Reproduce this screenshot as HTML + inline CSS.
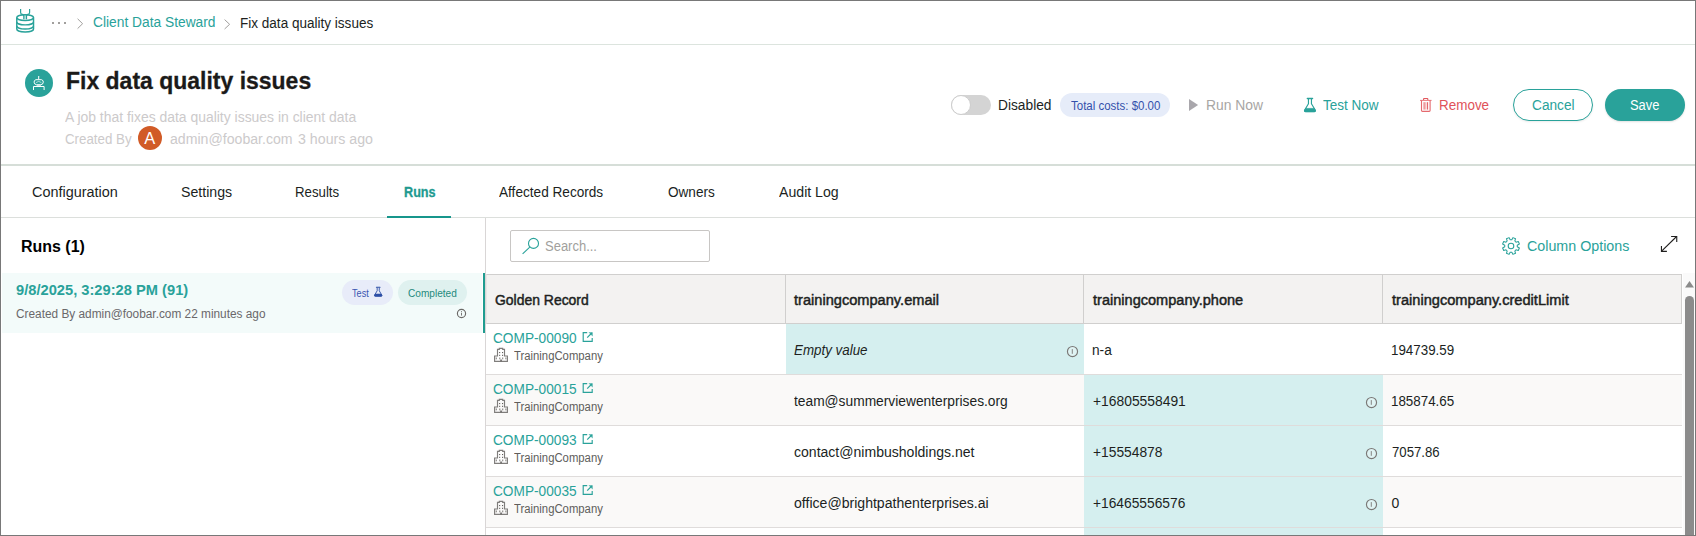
<!DOCTYPE html>
<html><head><meta charset="utf-8"><title>Fix data quality issues</title>
<style>
*{box-sizing:border-box;margin:0;padding:0}
html,body{width:1696px;height:536px;overflow:hidden;background:#fff}
body{font-family:"Liberation Sans",sans-serif;position:relative;color:#201f1e}
.a{position:absolute}
.t{transform-origin:0 0;position:absolute;white-space:nowrap;display:block}
svg{position:absolute;overflow:visible}
</style></head><body>
<!-- header / tab separators -->
<div class="a" style="left:0;top:44px;width:1696px;height:1px;background:#dce4de"></div>
<div class="a" style="left:0;top:164px;width:1696px;height:2px;background:#d6ded8"></div>
<div class="a" style="left:0;top:217px;width:1696px;height:1px;background:#dcdfdc"></div>
<div class="a" style="left:387px;top:216px;width:64px;height:2px;background:#17968c"></div>

<!-- title icon circle + avatar -->
<div class="a" style="left:25px;top:69px;width:28px;height:28px;border-radius:50%;background:#29a29a"></div>
<div class="a" style="left:138px;top:126px;width:24px;height:24px;border-radius:50%;background:#d15b27"></div>

<!-- toggle -->
<div class="a" style="left:951px;top:95px;width:40px;height:20px;border-radius:10px;background:#d4d4d4"></div>
<div class="a" style="left:951px;top:95px;width:20px;height:20px;border-radius:50%;background:#fff;border:1px solid #cdcdcd"></div>
<!-- cost pill -->
<div class="a" style="left:1060px;top:93px;width:110px;height:24px;border-radius:12px;background:#e6ecf9"></div>
<!-- buttons -->
<div class="a" style="left:1513px;top:89px;width:80px;height:32px;border-radius:16px;border:1px solid #29a29a;background:#fff;box-shadow:0 1px 2px rgba(0,0,0,.08)"></div>
<div class="a" style="left:1605px;top:89px;width:80px;height:32px;border-radius:16px;background:#29a29a;box-shadow:0 1px 2px rgba(0,0,0,.12)"></div>

<!-- left panel -->
<div class="a" style="left:2px;top:273px;width:480px;height:60px;background:#f3fbfa"></div>
<div class="a" style="left:483px;top:273px;width:2px;height:60px;background:#1f9c90"></div>
<div class="a" style="left:485px;top:218px;width:1px;height:318px;background:#d9d6d6"></div>
<div class="a" style="left:342px;top:280px;width:51px;height:25px;border-radius:12.5px;background:#e8ecf9"></div>
<div class="a" style="left:398px;top:280px;width:69px;height:25px;border-radius:12.5px;background:#dff1ef"></div>

<!-- search box -->
<div class="a" style="left:510px;top:230px;width:200px;height:32px;border:1px solid #c8c6c4;border-radius:2px;background:#fff"></div>

<!-- table -->
<div class="a" style="left:486px;top:274px;width:1196px;height:50px;background:#f3f2f1;border:1px solid #d0cfce;border-left-color:#e9e7e6"></div>
<div class="a" style="left:785px;top:275px;width:1px;height:48px;background:#d0cfce"></div>
<div class="a" style="left:1083px;top:275px;width:1px;height:48px;background:#d0cfce"></div>
<div class="a" style="left:1382px;top:275px;width:1px;height:48px;background:#d0cfce"></div>
<!-- rows -->
<div class="a" style="left:486px;top:375px;width:1196px;height:50px;background:#faf9f8"></div>
<div class="a" style="left:486px;top:477px;width:1196px;height:50px;background:#faf9f8"></div>
<!-- highlighted cells -->
<div class="a" style="left:786px;top:324px;width:298px;height:50px;background:#d5efef"></div>
<div class="a" style="left:1084px;top:375px;width:299px;height:161px;background:#d5efef"></div>
<div class="a" style="left:486px;top:374px;width:1196px;height:1px;background:#dfdcdb"></div>
<div class="a" style="left:486px;top:425px;width:1196px;height:1px;background:#dfdcdb"></div>
<div class="a" style="left:486px;top:476px;width:1196px;height:1px;background:#dfdcdb"></div>
<div class="a" style="left:486px;top:527px;width:1196px;height:1px;background:#dfdcdb"></div>

<!-- scrollbar -->
<div class="a" style="left:1683px;top:273px;width:12px;height:263px;background:#fafafa"></div>
<div class="a" style="left:1685px;top:296px;width:9px;height:240px;border-radius:4.5px 4.5px 0 0;background:#8b8b8b"></div>
<svg style="left:1685px;top:281px" width="9" height="7" viewBox="0 0 9 7"><path d="M0 6.5 L4.5 0 L9 6.5 Z" fill="#8b8b8b"/></svg>

<svg style="left:0;top:0" width="1696" height="536" viewBox="0 0 1696 536" fill="none">
<rect x="23.9" y="14.6" width="2.6" height="4.6" fill="#29a29a" opacity=".3"/>
<path d="M16.8 17.6 V29 A8.35 3 0 0 0 33.5 29 V17.6" stroke="#29a29a" stroke-width="1.5"/>
<ellipse cx="25.15" cy="17.6" rx="8.35" ry="2.9" stroke="#29a29a" stroke-width="1.4"/>
<path d="M16.8 21.9 A8.35 3 0 0 0 33.5 21.9 M16.8 26 A8.35 3 0 0 0 33.5 26" stroke="#29a29a" stroke-width="1.4"/>
<path d="M20.6 9 V12.4 Q20.6 14 22.4 14.4 Q23.8 14.8 23.8 16 V19.3 M29.6 9 V12.4 Q29.6 14 27.8 14.4 Q26.5 14.8 26.5 16 V19.3" stroke="#29a29a" stroke-width="1.2"/>
<rect x="52" y="22" width="2" height="2" fill="#a19f9d"/>
<rect x="58" y="22" width="2" height="2" fill="#a19f9d"/>
<rect x="64" y="22" width="2" height="2" fill="#a19f9d"/>
<path d="M77.6 18.8 L82.6 23.7 L77.6 28.6" stroke="#a19f9d" stroke-width="1"/>
<path d="M224.6 19.6 L229.6 24.3 L224.6 29" stroke="#a19f9d" stroke-width="1"/>
<g stroke="#fff" stroke-width="1" fill="none"><path d="M38.7 76.6 V79.4"/><circle cx="38.7" cy="76.6" r="0.6" fill="#fff" stroke="none"/><path d="M35.9 79.7 H41.5 Q43.5 80.3 43.3 82.2 Q43 84.7 40.8 84.7 H36.6 Q34.4 84.7 34.1 82.2 Q33.9 80.3 35.9 79.7 Z"/><path d="M36 82.6 Q38.7 80.2 41.4 82.6" opacity=".6"/><path d="M36.6 85.6 H40.9" opacity=".7"/><path d="M33.5 90 V86.5 H44.1 V90"/></g>
<path d="M1189 98.9 L1198.1 105 L1189 111.1 Z" fill="#a9a7ac"/>
<path d="M1308.45 99.10 V103.70 L1304.70 110.00 Q1304.00 111.60 1305.60 111.60 H1314.30 Q1315.90 111.60 1315.20 110.00 L1311.45 103.70 V99.10" fill="none" stroke="#29a29a" stroke-width="1.15" stroke-linejoin="round"/><path d="M1305.70 108.40 H1314.20 L1315.20 110.00 Q1315.90 111.60 1314.30 111.60 H1305.60 Q1304.00 111.60 1304.70 110.00 Z" fill="#29a29a" stroke="#29a29a" stroke-width="0.69" stroke-linejoin="round"/><path d="M1307.30 98.50 H1312.60" stroke="#29a29a" stroke-width="1.32" stroke-linecap="round"/>
<g stroke="#e2595e" fill="none"><path d="M1423.6 99.9 V98.9 Q1423.6 98.5 1424 98.5 H1427.4 Q1427.8 98.5 1427.8 98.9 V99.9" stroke-width="1.1"/><path d="M1420 100.4 H1431.6" stroke-width="1" opacity=".8"/><path d="M1421.5 100.4 V110.5 Q1421.5 111.4 1422.4 111.4 H1429.2 Q1430.1 111.4 1430.1 110.5 V100.4" stroke-width="1.1" opacity=".9"/><path d="M1424.1 102.2 V109.6 M1427.6 102.2 V109.6" stroke-width="1"/><path d="M1425.85 102.2 V109.6" stroke-width="1" opacity=".6"/></g>
<circle cx="533.5" cy="243.4" r="5" stroke="#29a29a" stroke-width="1.1"/><path d="M529.8 247.1 L522.6 253.8" stroke="#29a29a" stroke-width="1.1"/>
<path d="M1517.25 246.82 L1519.38 247.93 L1518.29 250.56 L1516.00 249.84 L1514.84 251.00 L1515.56 253.29 L1512.93 254.38 L1511.82 252.25 L1510.18 252.25 L1509.07 254.38 L1506.44 253.29 L1507.16 251.00 L1506.00 249.84 L1503.71 250.56 L1502.62 247.93 L1504.75 246.82 L1504.75 245.18 L1502.62 244.07 L1503.71 241.44 L1506.00 242.16 L1507.16 241.00 L1506.44 238.71 L1509.07 237.62 L1510.18 239.75 L1511.82 239.75 L1512.93 237.62 L1515.56 238.71 L1514.84 241.00 L1516.00 242.16 L1518.29 241.44 L1519.38 244.07 L1517.25 245.18 Z" stroke="#29a29a" stroke-width="1.05" stroke-linejoin="round"/><circle cx="1511" cy="246" r="2.8" stroke="#29a29a" stroke-width="1.05"/>
<g stroke="#201f1e" stroke-width="1.1"><path d="M1676.6 236.5 L1661.6 251.2"/><path d="M1671.1 236.45 H1676.75 V241.9"/><path d="M1661.45 246.1 V251.35 H1666.9"/></g>
<path d="M377.18 287.60 V290.77 L374.59 295.12 Q374.11 296.22 375.21 296.22 H381.21 Q382.32 296.22 381.83 295.12 L379.25 290.77 V287.60" fill="none" stroke="#2d4fa6" stroke-width="0.9" stroke-linejoin="round"/><path d="M375.28 294.01 H381.14 L381.83 295.12 Q382.32 296.22 381.21 296.22 H375.21 Q374.11 296.22 374.59 295.12 Z" fill="#2d4fa6" stroke="#2d4fa6" stroke-width="0.54" stroke-linejoin="round"/><path d="M376.38 287.18 H380.04" stroke="#2d4fa6" stroke-width="1.03" stroke-linecap="round"/>
<circle cx="461.5" cy="313.5" r="4.1" fill="none" stroke="#6b6967" stroke-width="1.15"/><path d="M461.5 312.7 V315.6" stroke="#6b6967" stroke-width="0.9"/><circle cx="461.5" cy="311.5" r="0.5" fill="#6b6967"/>
<circle cx="1072.5" cy="351.5" r="5.05" fill="rgba(255,255,255,.25)" stroke="#7a7876" stroke-width="1.15"/><path d="M1072.3 349.1 V353.8" stroke="#7a7876" stroke-width="0.9"/>
<circle cx="1371.5" cy="402.5" r="5.05" fill="rgba(255,255,255,.25)" stroke="#7a7876" stroke-width="1.15"/><path d="M1371.3 400.1 V404.8" stroke="#7a7876" stroke-width="0.9"/>
<circle cx="1371.5" cy="453.5" r="5.05" fill="rgba(255,255,255,.25)" stroke="#7a7876" stroke-width="1.15"/><path d="M1371.3 451.1 V455.8" stroke="#7a7876" stroke-width="0.9"/>
<circle cx="1371.5" cy="504.5" r="5.05" fill="rgba(255,255,255,.25)" stroke="#7a7876" stroke-width="1.15"/><path d="M1371.3 502.1 V506.8" stroke="#7a7876" stroke-width="0.9"/>
<path d="M587.2 332.6 H583.2 V341.3 H592.2 V337.90000000000003" fill="none" stroke="#29a29a" stroke-width="1.15"/><path d="M587.2 337.6 L591.8000000000001 333.0" stroke="#29a29a" stroke-width="1.15"/><path d="M588.5 332.20000000000005 H592.7 V336.40000000000003 Z" fill="#29a29a" opacity=".85"/>
<path d="M494.6 361.29999999999995 V356.0 H497.5 V349.4 H499.3 V348.4 H502.70000000000005 V349.4 H504.5 V356.0 H507.40000000000003 V361.29999999999995 Z" fill="none" stroke="#7f7d7b" stroke-width="1.15"/><rect x="499.1" y="352.0" width="1.1" height="1.1" fill="#605e5c"/><rect x="502.0" y="352.0" width="1.1" height="1.1" fill="#605e5c"/><rect x="499.1" y="354.8" width="1.1" height="1.1" fill="#605e5c"/><rect x="502.0" y="354.8" width="1.1" height="1.1" fill="#605e5c"/><rect x="495.7" y="357.5" width="1.3" height="1.8" fill="#7f7d7b" opacity=".8"/><rect x="499.1" y="357.5" width="1.3" height="1.8" fill="#7f7d7b" opacity=".8"/><rect x="502.0" y="357.5" width="1.3" height="1.8" fill="#7f7d7b" opacity=".8"/><rect x="505.2" y="357.5" width="1.3" height="1.8" fill="#7f7d7b" opacity=".8"/><rect x="500.3" y="359.5" width="1.5" height="1.8" fill="#605e5c"/>
<path d="M587.2 383.6 H583.2 V392.3 H592.2 V388.90000000000003" fill="none" stroke="#29a29a" stroke-width="1.15"/><path d="M587.2 388.6 L591.8000000000001 384.0" stroke="#29a29a" stroke-width="1.15"/><path d="M588.5 383.20000000000005 H592.7 V387.40000000000003 Z" fill="#29a29a" opacity=".85"/>
<path d="M494.6 412.29999999999995 V407.0 H497.5 V400.4 H499.3 V399.4 H502.70000000000005 V400.4 H504.5 V407.0 H507.40000000000003 V412.29999999999995 Z" fill="none" stroke="#7f7d7b" stroke-width="1.15"/><rect x="499.1" y="403.0" width="1.1" height="1.1" fill="#605e5c"/><rect x="502.0" y="403.0" width="1.1" height="1.1" fill="#605e5c"/><rect x="499.1" y="405.8" width="1.1" height="1.1" fill="#605e5c"/><rect x="502.0" y="405.8" width="1.1" height="1.1" fill="#605e5c"/><rect x="495.7" y="408.5" width="1.3" height="1.8" fill="#7f7d7b" opacity=".8"/><rect x="499.1" y="408.5" width="1.3" height="1.8" fill="#7f7d7b" opacity=".8"/><rect x="502.0" y="408.5" width="1.3" height="1.8" fill="#7f7d7b" opacity=".8"/><rect x="505.2" y="408.5" width="1.3" height="1.8" fill="#7f7d7b" opacity=".8"/><rect x="500.3" y="410.5" width="1.5" height="1.8" fill="#605e5c"/>
<path d="M587.2 434.6 H583.2 V443.3 H592.2 V439.90000000000003" fill="none" stroke="#29a29a" stroke-width="1.15"/><path d="M587.2 439.6 L591.8000000000001 435.0" stroke="#29a29a" stroke-width="1.15"/><path d="M588.5 434.20000000000005 H592.7 V438.40000000000003 Z" fill="#29a29a" opacity=".85"/>
<path d="M494.6 463.29999999999995 V458.0 H497.5 V451.4 H499.3 V450.4 H502.70000000000005 V451.4 H504.5 V458.0 H507.40000000000003 V463.29999999999995 Z" fill="none" stroke="#7f7d7b" stroke-width="1.15"/><rect x="499.1" y="454.0" width="1.1" height="1.1" fill="#605e5c"/><rect x="502.0" y="454.0" width="1.1" height="1.1" fill="#605e5c"/><rect x="499.1" y="456.8" width="1.1" height="1.1" fill="#605e5c"/><rect x="502.0" y="456.8" width="1.1" height="1.1" fill="#605e5c"/><rect x="495.7" y="459.5" width="1.3" height="1.8" fill="#7f7d7b" opacity=".8"/><rect x="499.1" y="459.5" width="1.3" height="1.8" fill="#7f7d7b" opacity=".8"/><rect x="502.0" y="459.5" width="1.3" height="1.8" fill="#7f7d7b" opacity=".8"/><rect x="505.2" y="459.5" width="1.3" height="1.8" fill="#7f7d7b" opacity=".8"/><rect x="500.3" y="461.5" width="1.5" height="1.8" fill="#605e5c"/>
<path d="M587.2 485.6 H583.2 V494.3 H592.2 V490.90000000000003" fill="none" stroke="#29a29a" stroke-width="1.15"/><path d="M587.2 490.6 L591.8000000000001 486.0" stroke="#29a29a" stroke-width="1.15"/><path d="M588.5 485.20000000000005 H592.7 V489.40000000000003 Z" fill="#29a29a" opacity=".85"/>
<path d="M494.6 514.3 V509.0 H497.5 V502.4 H499.3 V501.4 H502.70000000000005 V502.4 H504.5 V509.0 H507.40000000000003 V514.3 Z" fill="none" stroke="#7f7d7b" stroke-width="1.15"/><rect x="499.1" y="505.0" width="1.1" height="1.1" fill="#605e5c"/><rect x="502.0" y="505.0" width="1.1" height="1.1" fill="#605e5c"/><rect x="499.1" y="507.8" width="1.1" height="1.1" fill="#605e5c"/><rect x="502.0" y="507.8" width="1.1" height="1.1" fill="#605e5c"/><rect x="495.7" y="510.5" width="1.3" height="1.8" fill="#7f7d7b" opacity=".8"/><rect x="499.1" y="510.5" width="1.3" height="1.8" fill="#7f7d7b" opacity=".8"/><rect x="502.0" y="510.5" width="1.3" height="1.8" fill="#7f7d7b" opacity=".8"/><rect x="505.2" y="510.5" width="1.3" height="1.8" fill="#7f7d7b" opacity=".8"/><rect x="500.3" y="512.5" width="1.5" height="1.8" fill="#605e5c"/>
</svg>
<span class="t" id="bc1" style="left:93.00px;top:14.60px;font-size:14px;line-height:14px;color:#29a29a;transform:scaleX(0.9840);">Client Data Steward</span>
<span class="t" id="bc2" style="left:240.00px;top:15.60px;font-size:14px;line-height:14px;color:#201f1e;transform:scaleX(0.9672);">Fix data quality issues</span>
<span class="t" id="title" style="left:66.00px;top:68.80px;font-size:24px;line-height:24px;color:#1b1a19;transform:scaleX(0.9573);font-weight:700;-webkit-text-stroke:0.3px currentColor;">Fix data quality issues</span>
<span class="t" id="sub" style="left:65.00px;top:110.10px;font-size:14px;line-height:14px;color:#cccacb;transform:scaleX(0.9949);">A job that fixes data quality issues in client data</span>
<span class="t" id="cby" style="left:65.00px;top:131.60px;font-size:14px;line-height:14px;color:#cccacb;transform:scaleX(0.9500);">Created By</span>
<span class="t" id="adm" style="left:170.00px;top:131.60px;font-size:14px;line-height:14px;color:#cccacb;transform:scaleX(1.0083);">admin@foobar.com</span>
<span class="t" id="hrs" style="left:298.00px;top:131.60px;font-size:14px;line-height:14px;color:#cccacb;transform:scaleX(1.0139);">3 hours ago</span>
<span class="t" id="avA" style="left:144.35px;top:130.10px;font-size:16.5px;line-height:16.5px;color:#ffffff;">A</span>
<span class="t" id="dis" style="left:998.00px;top:98.10px;font-size:14px;line-height:14px;color:#201f1e;transform:scaleX(0.9819);">Disabled</span>
<span class="t" id="cost" style="left:1071.00px;top:99.80px;font-size:12px;line-height:12px;color:#3350ab;transform:scaleX(0.9570);">Total costs: $0.00</span>
<span class="t" id="run" style="left:1206.00px;top:98.10px;font-size:14px;line-height:14px;color:#a8a6a4;transform:scaleX(0.9912);">Run Now</span>
<span class="t" id="test" style="left:1323.00px;top:98.10px;font-size:14px;line-height:14px;color:#29a29a;transform:scaleX(0.9653);">Test Now</span>
<span class="t" id="rem" style="left:1439.00px;top:98.10px;font-size:14px;line-height:14px;color:#e0525a;transform:scaleX(0.9608);">Remove</span>
<span class="t" id="can" style="left:1532.00px;top:98.10px;font-size:14px;line-height:14px;color:#29a29a;transform:scaleX(0.9773);">Cancel</span>
<span class="t" id="sav" style="left:1630.00px;top:98.10px;font-size:14px;line-height:14px;color:#ffffff;transform:scaleX(0.9205);">Save</span>
<span class="t" id="t1" style="left:32.00px;top:185.10px;font-size:14px;line-height:14px;color:#201f1e;transform:scaleX(1.0304);">Configuration</span>
<span class="t" id="t2" style="left:181.00px;top:185.10px;font-size:14px;line-height:14px;color:#201f1e;transform:scaleX(1.0106);">Settings</span>
<span class="t" id="t3" style="left:295.00px;top:185.10px;font-size:14px;line-height:14px;color:#201f1e;transform:scaleX(0.9463);">Results</span>
<span class="t" id="t4" style="left:404.00px;top:185.10px;font-size:14px;line-height:14px;color:#219a90;transform:scaleX(0.9042);font-weight:700;-webkit-text-stroke:0.3px currentColor;">Runs</span>
<span class="t" id="t5" style="left:499.00px;top:185.10px;font-size:14px;line-height:14px;color:#201f1e;transform:scaleX(0.9723);">Affected Records</span>
<span class="t" id="t6" style="left:668.00px;top:185.10px;font-size:14px;line-height:14px;color:#201f1e;transform:scaleX(0.9692);">Owners</span>
<span class="t" id="t7" style="left:779.00px;top:185.10px;font-size:14px;line-height:14px;color:#201f1e;transform:scaleX(1.0089);">Audit Log</span>
<span class="t" id="runs" style="left:21.00px;top:239.40px;font-size:16px;line-height:16px;color:#000000;transform:scaleX(0.9977);font-weight:700;">Runs (1)</span>
<span class="t" id="rt" style="left:16.00px;top:283.10px;font-size:14px;line-height:14px;color:#29a29a;transform:scaleX(1.0488);font-weight:700;">9/8/2025, 3:29:28 PM (91)</span>
<span class="t" id="rs" style="left:16.00px;top:307.80px;font-size:12px;line-height:12px;color:#6a686a;transform:scaleX(0.9862);">Created By admin@foobar.com 22 minutes ago</span>
<span class="t" id="ptest" style="left:351.75px;top:287.50px;font-size:10.5px;line-height:10.5px;color:#3a55b0;transform:scaleX(0.8716);">Test</span>
<span class="t" id="pcomp" style="left:408.00px;top:287.50px;font-size:10.5px;line-height:10.5px;color:#1f8a7d;transform:scaleX(0.9613);">Completed</span>
<span class="t" id="srch" style="left:545.00px;top:239.10px;font-size:14px;line-height:14px;color:#a19f9d;transform:scaleX(0.9277);">Search...</span>
<span class="t" id="colopt" style="left:1527.00px;top:239.10px;font-size:14px;line-height:14px;color:#29a29a;transform:scaleX(1.0201);">Column Options</span>
<span class="t" id="h1" style="left:494.50px;top:292.85px;font-size:14px;line-height:14px;color:#201f1e;transform:scaleX(0.9955);-webkit-text-stroke:0.45px currentColor;">Golden Record</span>
<span class="t" id="h2" style="left:794.00px;top:292.85px;font-size:14px;line-height:14px;color:#201f1e;transform:scaleX(1.0433);-webkit-text-stroke:0.45px currentColor;">trainingcompany.email</span>
<span class="t" id="h3" style="left:1093.00px;top:292.85px;font-size:14px;line-height:14px;color:#201f1e;transform:scaleX(1.0394);-webkit-text-stroke:0.45px currentColor;">trainingcompany.phone</span>
<span class="t" id="h4" style="left:1392.00px;top:292.85px;font-size:14px;line-height:14px;color:#201f1e;transform:scaleX(1.0435);-webkit-text-stroke:0.45px currentColor;">trainingcompany.creditLimit</span>
<span class="t" id="r0a" style="left:493.00px;top:330.85px;font-size:14px;line-height:14px;color:#29a29a;transform:scaleX(0.9766);">COMP-00090</span>
<span class="t" id="r0t" style="left:513.75px;top:349.80px;font-size:12px;line-height:12px;color:#605e5c;transform:scaleX(0.9426);">TrainingCompany</span>
<span class="t" id="r0b" style="left:794.00px;top:343.10px;font-size:14px;line-height:14px;color:#201f1e;transform:scaleX(0.9545);font-style:italic;">Empty value</span>
<span class="t" id="r0c" style="left:1092.00px;top:343.10px;font-size:14px;line-height:14px;color:#201f1e;transform:scaleX(0.9776);">n-a</span>
<span class="t" id="r0d" style="left:1391.00px;top:343.10px;font-size:14px;line-height:14px;color:#201f1e;transform:scaleX(0.9538);">194739.59</span>
<span class="t" id="r1a" style="left:493.00px;top:381.85px;font-size:14px;line-height:14px;color:#29a29a;transform:scaleX(0.9766);">COMP-00015</span>
<span class="t" id="r1t" style="left:513.75px;top:400.80px;font-size:12px;line-height:12px;color:#605e5c;transform:scaleX(0.9426);">TrainingCompany</span>
<span class="t" id="r1b" style="left:794.00px;top:394.10px;font-size:14px;line-height:14px;color:#201f1e;transform:scaleX(0.9839);">team@summerviewenterprises.org</span>
<span class="t" id="r1c" style="left:1093.00px;top:394.10px;font-size:14px;line-height:14px;color:#201f1e;transform:scaleX(0.9892);">+16805558491</span>
<span class="t" id="r1d" style="left:1391.00px;top:394.10px;font-size:14px;line-height:14px;color:#201f1e;transform:scaleX(0.9548);">185874.65</span>
<span class="t" id="r2a" style="left:493.00px;top:432.85px;font-size:14px;line-height:14px;color:#29a29a;transform:scaleX(0.9766);">COMP-00093</span>
<span class="t" id="r2t" style="left:513.75px;top:451.80px;font-size:12px;line-height:12px;color:#605e5c;transform:scaleX(0.9426);">TrainingCompany</span>
<span class="t" id="r2b" style="left:794.00px;top:445.10px;font-size:14px;line-height:14px;color:#201f1e;transform:scaleX(1.0028);">contact@nimbusholdings.net</span>
<span class="t" id="r2c" style="left:1093.00px;top:445.10px;font-size:14px;line-height:14px;color:#201f1e;transform:scaleX(0.9857);">+15554878</span>
<span class="t" id="r2d" style="left:1392.00px;top:445.10px;font-size:14px;line-height:14px;color:#201f1e;transform:scaleX(0.9400);">7057.86</span>
<span class="t" id="r3a" style="left:493.00px;top:483.85px;font-size:14px;line-height:14px;color:#29a29a;transform:scaleX(0.9766);">COMP-00035</span>
<span class="t" id="r3t" style="left:513.75px;top:502.80px;font-size:12px;line-height:12px;color:#605e5c;transform:scaleX(0.9426);">TrainingCompany</span>
<span class="t" id="r3b" style="left:794.00px;top:496.10px;font-size:14px;line-height:14px;color:#201f1e;transform:scaleX(1.0052);">office@brightpathenterprises.ai</span>
<span class="t" id="r3c" style="left:1093.00px;top:496.10px;font-size:14px;line-height:14px;color:#201f1e;transform:scaleX(0.9841);">+16465556576</span>
<span class="t" id="r3d" style="left:1391.50px;top:496.10px;font-size:14px;line-height:14px;color:#201f1e;">0</span>

<!-- outer frame -->
<div class="a" style="left:0;top:0;width:1696px;height:536px;border:1px solid #787878;pointer-events:none"></div>
</body></html>
